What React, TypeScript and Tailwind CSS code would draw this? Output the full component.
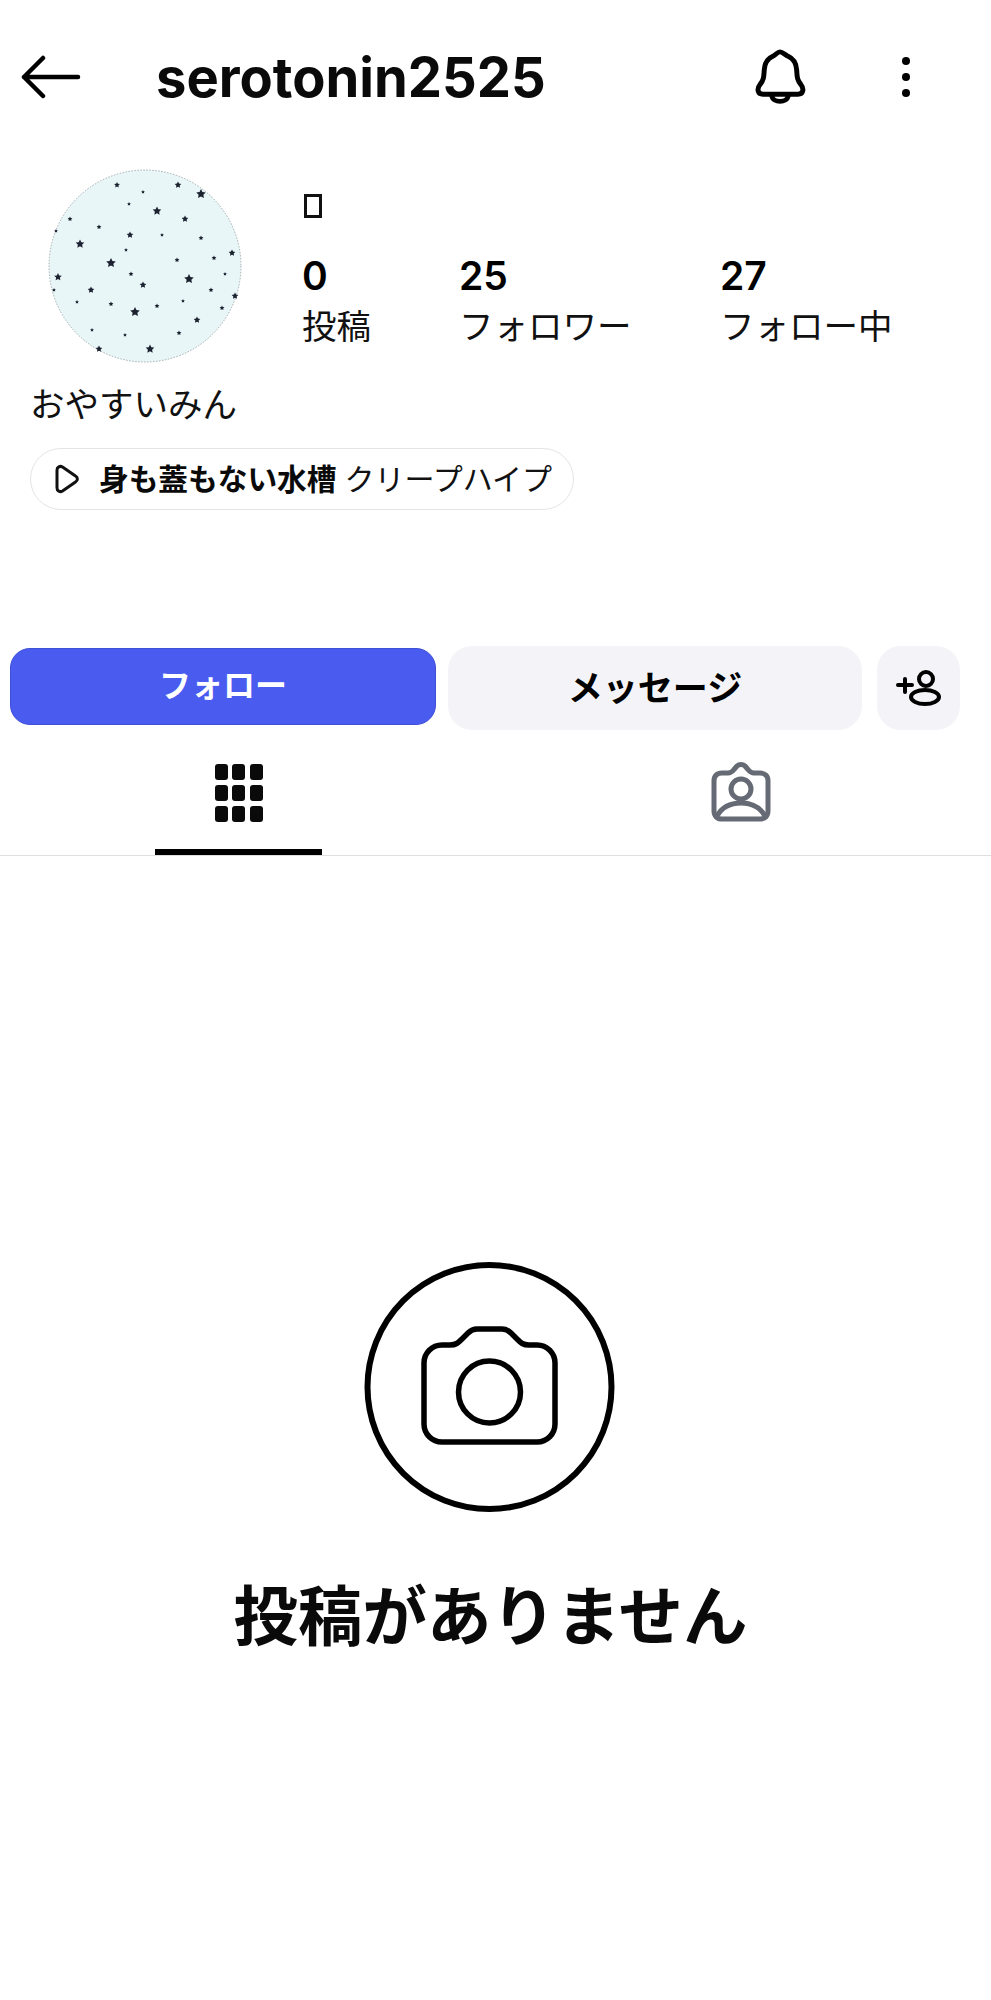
import React from 'react';

const JP = "font-['Inter','Noto_Sans_CJK_JP',sans-serif]";

// x, y, radius in px of the 240x240 avatar crop
const stars: number[][] = [
  [171, 44, 5], [81, 113, 5], [159, 129, 5], [105, 162, 5], [120, 199, 4.5],
  [50, 94, 4.5], [127, 61, 4.5], [28, 127, 4], [202, 103, 3.5], [205, 146, 3.5], [148, 35, 3.5], [87, 35, 3], [155, 69, 3.5],
  [100, 85, 3.5], [113, 135, 3.5], [61, 140, 3.5], [167, 170, 3.5], [69, 199, 3.5],
  [113, 42, 2], [99, 54, 2], [40, 69, 2.5], [69, 77, 2.5], [26, 81, 2], [132, 85, 2], [171, 88, 2.5], [96, 100, 2],
  [147, 110, 2.5], [184, 108, 2.5], [195, 124, 2], [101, 124, 2.5], [24, 140, 2], [181, 140, 2.5], [47, 152, 2], [81, 154, 2.5],
  [127, 156, 2.5], [153, 151, 2], [192, 158, 2.5], [62, 180, 2], [95, 185, 2], [149, 183, 2.5],
];

const starPoints = (cx: number, cy: number, r: number) => {
  const pts: string[] = [];
  for (let i = 0; i < 10; i++) {
    const rad = i % 2 === 0 ? r : r * 0.5;
    const a = -Math.PI / 2 + (i * Math.PI) / 5;
    pts.push(`${cx + rad * Math.cos(a)},${cy + rad * Math.sin(a)}`);
  }
  return pts.join(' ');
};

const Avatar = () => (
  <svg width="194" height="194" viewBox="18 19 194 194" className="shrink-0">
    <circle cx="115" cy="116" r="96" fill="#e8f6f7" stroke="#8f9a9c" strokeWidth="0.8" strokeDasharray="1.5 1.5" />
    {stars.map(([x, y, r], i) => (
      <polygon key={i} points={starPoints(x, y, r)} fill="#1c2230" />
    ))}
  </svg>
);

const BackIcon = () => (
  <svg width="60" height="44" viewBox="0 0 60 44" fill="none" stroke="#000" strokeWidth="4.5" strokeLinecap="round" strokeLinejoin="round" className="shrink-0">
    <path d="M22 3 3 22l19 19M3 22h54" />
  </svg>
);

const BellIcon = () => (
  <svg width="54" height="59" viewBox="0 0 60 65" fill="none" stroke="#000" strokeWidth="5.5" strokeLinecap="round" strokeLinejoin="round" className="shrink-0">
    <path d="M30 4C33 4 35 7 39 9C46 12 48 17 48.500 24C49 33 49.500 36 53 40C57 45 56 51 50 51H11C5 51 4 45 8 40C11.500 36 12 33 12.500 24C13 17 15 12 22 9C26 7 27 4 30 4Z" />
    <path d="M21 53C22 61 38 61 39 53" />
  </svg>
);

const DotsIcon = () => (
  <svg width="12" height="44" viewBox="0 0 12 44" fill="#000" className="shrink-0">
    <circle cx="6" cy="6" r="4" />
    <circle cx="6" cy="22" r="4" />
    <circle cx="6" cy="38" r="4" />
  </svg>
);

const PlayIcon = () => (
  <svg width="26" height="30" viewBox="0 0 26 30" fill="none" stroke="#111" strokeWidth="3" strokeLinejoin="round" className="shrink-0">
    <path d="M3 6C3 3 6 1.500 8.500 3L21.500 12C24 13.500 24 16.500 21.500 18L8.500 27C6 28.500 3 27 3 24Z" />
  </svg>
);

const AddUserIcon = () => (
  <svg width="46" height="36" viewBox="0 0 46 36" fill="none" stroke="#000" strokeWidth="4" strokeLinecap="round" className="shrink-0">
    <path d="M2 15h14M9 9v13" />
    <circle cx="30" cy="9" r="7" />
    <ellipse cx="29" cy="27" rx="14" ry="7" />
  </svg>
);

const GridIcon = () => (
  <div className="grid grid-cols-[13px_13px_13px] grid-rows-[16px_16px_16px] gap-x-[4.5px] gap-y-[5px]">
    {[0, 1, 2, 3, 4, 5, 6, 7, 8].map((i) => (
      <div key={i} className="bg-[#0a0a0a] rounded-[3px]" />
    ))}
  </div>
);

const TagIcon = () => (
  <svg width="60" height="60" viewBox="0 0 60 60" fill="none" stroke="#656a75" strokeWidth="5" strokeLinejoin="round" className="shrink-0">
    <path d="M11 11H17C20 11 21 10 23 7.500L26 4C28 2 32 2 34 4L37 7.500C39 10 40 11 43 11H49C54 11 57 14 57 19V49C57 54 54 57 49 57H11C6 57 3 54 3 49V19C3 14 6 11 11 11Z" />
    <circle cx="30" cy="27" r="10" />
    <path d="M6 54C11 45 19 41 30 41C41 41 49 45 54 54" />
  </svg>
);

const CameraCircle = () => (
  <svg width="300" height="300" viewBox="0 0 300 300" fill="none" stroke="#000" strokeLinejoin="round" className="shrink-0">
    <circle cx="149.500" cy="147" r="122" strokeWidth="6" />
    <path strokeWidth="5.500" d="M102 105H110C116 105 118 103 122 99L128 93C131 90 133 89 137 89H162C166 89 168 90 171 93L177 99C181 103 183 105 189 105H197C207 105 215 113 215 123V184C215 194 207 202 197 202H102C92 202 84 194 84 184V123C84 113 92 105 102 105Z" />
    <circle cx="149.500" cy="152" r="31" strokeWidth="5.500" />
  </svg>
);

const Stat = ({ value, label, className }: { value: string; label: string; className: string }) => (
  <div className={`flex flex-col ${className}`}>
    <span className="text-[39px] leading-[46px] font-semibold text-black">{value}</span>
    <span className="text-[34.500px] leading-[42px] text-[#111] mt-[7px] whitespace-nowrap">{label}</span>
  </div>
);

export default function App() {
  return (
    <div className={`w-full h-[2000px] bg-white overflow-hidden flex flex-col ${JP}`}>
      <header className="flex items-center h-[154px] pl-[21px]">
        <BackIcon />
        <h1 className="ml-[75px] text-[54.300px] leading-none font-bold text-[#0a0a0a]">serotonin2525</h1>
        <div className="ml-auto mr-[79px] flex items-center gap-[93px]">
          <BellIcon />
          <DotsIcon />
        </div>
      </header>

      <section className="flex pl-[48px] mt-[15px]">
        <Avatar />
        <div className="ml-[60px] flex flex-col">
          <div className="w-[18px] h-[24px] ml-[2px] mt-[25px] border-[3px] border-[#111]" />
          <div className="flex mt-[35px]">
            <Stat value="0" label="投稿" className="w-[157px]" />
            <Stat value="25" label="フォロワー" className="w-[261px]" />
            <Stat value="27" label="フォロー中" className="w-[200px]" />
          </div>
        </div>
      </section>

      <p className="ml-[30px] mt-[20px] text-[34.500px] leading-[44px] text-[#111]">おやすいみん</p>

      <div className="ml-[30px] mt-[21px] w-[544px] h-[62px] rounded-full border border-[#e4e4e4] flex items-center pl-[23px]">
        <PlayIcon />
        <span className="ml-[19px] text-[29.700px] font-bold text-[#0a0a0a] whitespace-nowrap">身も蓋もない水槽</span>
        <span className="ml-[8px] text-[30px] text-[#111] whitespace-nowrap">クリープハイプ</span>
      </div>

      <div className="flex items-center mt-[136px] pl-[10px]">
        <button className="w-[426px] h-[77px] mb-[4px] rounded-[20px] bg-[#4a5cf0] border border-[#3f4fd6] text-white text-[32px] font-bold">
          フォロー
        </button>
        <button className="ml-[12px] w-[414px] h-[84px] rounded-[24px] bg-[#f3f3f8] text-black text-[35px] font-bold">
          メッセージ
        </button>
        <button className="ml-[15px] w-[83px] h-[84px] rounded-[24px] bg-[#f3f3f8] flex items-center justify-center">
          <AddUserIcon />
        </button>
      </div>

      <nav className="flex h-[126px] border-b border-[#dfdfdf]">
        <div className="ml-[155px] w-[167px] h-full border-b-[6px] border-black flex justify-center pt-[34px]">
          <GridIcon />
        </div>
        <div className="ml-[389px] pt-[32px]">
          <TagIcon />
        </div>
      </nav>

      <main className="flex flex-col items-center">
        <div className="mt-[384px] mr-[12px]">
          <CameraCircle />
        </div>
        <p className="mt-[37px] mr-[10px] text-[64.500px] leading-[80px] font-bold text-[#0a0a0a]">投稿がありません</p>
      </main>
    </div>
  );
}
